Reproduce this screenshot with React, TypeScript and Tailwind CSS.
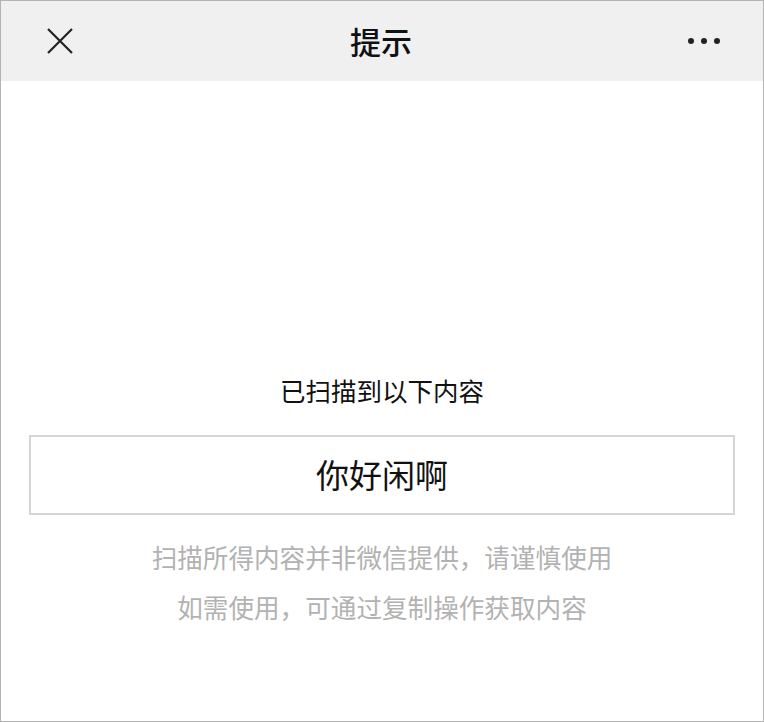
import React from "react";

const font = { fontFamily: '"Noto Sans CJK SC", "Noto Sans", sans-serif' };

export default function App() {
  return (
    <div
      className="w-[764px] h-[722px] bg-white border border-[#b4b4b4] flex flex-col"
      style={font}
    >
      {/* top bar */}
      <div className="h-[80px] bg-[#f0f0f0] flex items-center justify-between px-[46px] pr-[43px]">
        <svg width="28" height="28" viewBox="0 0 28 28" className="-ml-[1px]">
          <path d="M2 2 L26 26 M26 2 L2 26" stroke="#222" strokeWidth="2.2" fill="none" />
        </svg>
        <h1 className="text-[31px] leading-none font-medium text-[#111] -mt-[2px]">提示</h1>
        <div className="flex items-center gap-[7px]">
          <span className="w-[6px] h-[6px] rounded-full bg-[#222]" />
          <span className="w-[6px] h-[6px] rounded-full bg-[#222]" />
          <span className="w-[6px] h-[6px] rounded-full bg-[#222]" />
        </div>
      </div>

      {/* body */}
      <div className="flex flex-col items-center px-[28px]">
        <p className="mt-[291px] text-[25.5px] leading-[36px] text-[#111]">已扫描到以下内容</p>
        <div className="mt-[27px] w-full h-[80px] border-2 border-[#d5d5d5] flex items-center justify-center">
          <span className="text-[33px] text-[#111]">你好闲啊</span>
        </div>
        <div className="mt-[17px] text-[25.6px] leading-[50px] text-[#b2b2b2] text-center">
          <p>扫描所得内容并非微信提供，请谨慎使用</p>
          <p>如需使用，可通过复制操作获取内容</p>
        </div>
      </div>
    </div>
  );
}
